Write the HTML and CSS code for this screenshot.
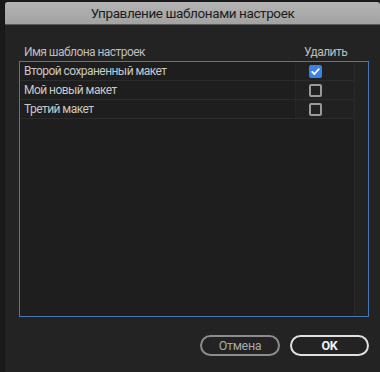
FILE: index.html
```html
<!DOCTYPE html>
<html lang="ru">
<head>
<meta charset="utf-8">
<link rel="stylesheet" href="styles.css">
</head>
<body>
<div class="win">
  <div class="titlebar">Управление шаблонами настроек</div>
  <div class="content">
    <div class="head">
      <span class="h-name">Имя шаблона настроек</span>
      <span class="h-del">Удалить</span>
    </div>
    <div class="list">
      <div class="rows">
        <div class="row">
          <span class="name">Второй сохраненный макет</span>
          <span class="cell"><span class="cb checked"><svg viewBox="0 0 13 13" width="13" height="13"><path d="M3.2 6.8 L5.4 9 L9.8 4.2" fill="none" stroke="#fff" stroke-width="1.8" stroke-linecap="round" stroke-linejoin="round"/></svg></span></span>
        </div>
        <div class="row">
          <span class="name">Мой новый макет</span>
          <span class="cell"><span class="cb"></span></span>
        </div>
        <div class="row">
          <span class="name">Третий макет</span>
          <span class="cell"><span class="cb"></span></span>
        </div>
        <div class="fill"></div>
      </div>
      <div class="track"></div>
    </div>
    <div class="buttons">
      <button class="btn cancel">Отмена</button>
      <button class="btn ok">OK</button>
    </div>
  </div>
</div>
</body>
</html>
```
FILE: styles.css
```css
html, body {
  margin: 0;
  padding: 0;
}
body {
  width: 380px;
  height: 372px;
  background: #1a1a1a;
  font-family: "Roboto", "Noto Sans", sans-serif;
  overflow: hidden;
}
.win {
  margin: 2px 0 0 4px;
  height: 370px;
  background: #232323;
  display: flex;
  flex-direction: column;
  border-left: 1px solid #151515;
}
.titlebar {
  height: 22px;
  background: linear-gradient(#b4b4b4, #a2a2a2);
  border-bottom: 1px solid #5a5a5a;
  color: #1c1c1c;
  font-size: 13.5px;
  letter-spacing: -0.4px;
  line-height: 22px;
  text-align: center;
  border-radius: 3px 3px 0 0;
}
.content {
  padding: 18px 11px 0 14px;
  display: flex;
  flex-direction: column;
}
.head {
  display: flex;
  height: 18px;
  align-items: center;
  font-size: 12px;
  letter-spacing: -0.55px;
  color: #bdbdbd;
}
.h-name {
  padding-left: 5px;
  flex: 1;
}
.h-del {
  width: 65px;
}
.list {
  height: 254px;
  border: 1px solid #4778b3;
  background: #1e1e1e;
  display: flex;
}
.rows {
  flex: 1;
  display: flex;
  flex-direction: column;
}
.row {
  height: 18px;
  border-bottom: 1px solid #2c2c2c;
  display: flex;
  align-items: center;
  font-size: 12px;
  letter-spacing: -0.55px;
  color: #c8c8c8;
}
.name {
  flex: 1;
  padding-left: 4px;
}
.cell {
  width: 59px;
  height: 18px;
  background: #212121;
  border-left: 1px solid #262626;
  display: flex;
  align-items: center;
  padding-left: 13px;
  box-sizing: border-box;
}
.fill {
  flex: 1;
}
.track {
  width: 13px;
  background: #222222;
  border-left: 1px solid #2a2a2a;
}
.cb {
  width: 13px;
  height: 13px;
  box-sizing: border-box;
  border: 2px solid #9a9a9a;
  border-radius: 2px;
  display: block;
}
.cb.checked {
  border: none;
  background: #3b82e6;
}
.cb svg {
  display: block;
}
.buttons {
  display: flex;
  justify-content: flex-end;
  gap: 10px;
  margin-top: 18px;
}
.btn {
  height: 21px;
  width: 80px;
  border-radius: 11px;
  background: transparent;
  font-family: "Roboto", "Noto Sans", sans-serif;
  font-size: 12.5px;
  letter-spacing: -0.3px;
  padding: 0;
  line-height: 17px;
}
.cancel {
  border: 2px solid #8c8c8c;
  color: #a8a8a8;
}
.ok {
  width: 79px;
  border: 2px solid #e0e0e0;
  color: #f2f2f2;
  font-weight: 700;
}
```
